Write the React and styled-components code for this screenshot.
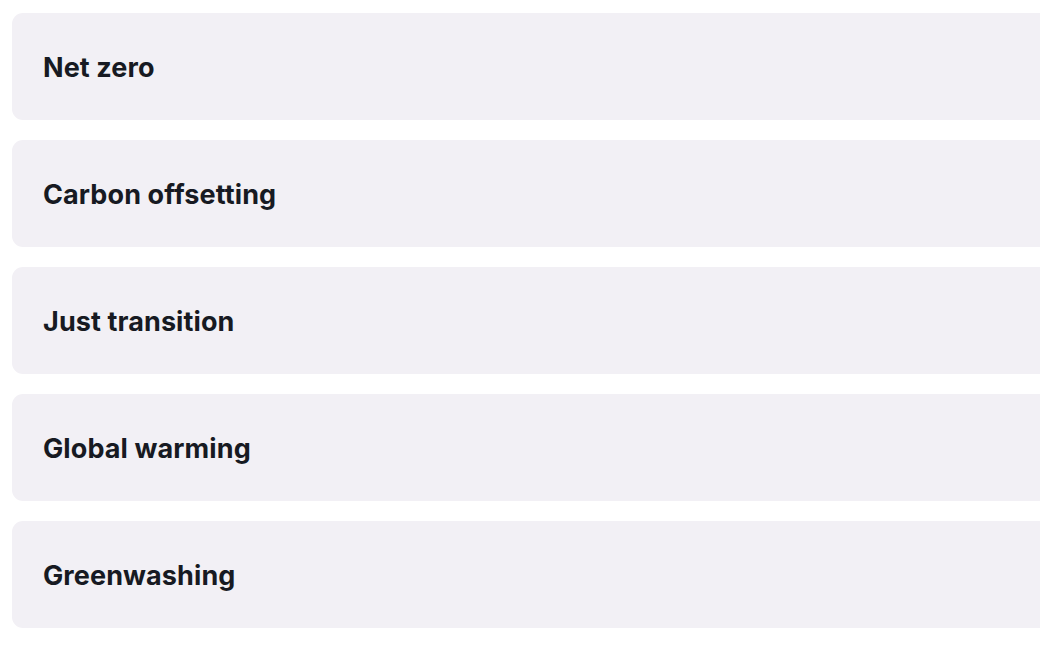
import React from "react";
import styled, { createGlobalStyle } from "styled-components";

const GlobalStyle = createGlobalStyle`
  html, body {
    margin: 0;
    padding: 0;
    background: #ffffff;
  }
`;

const List = styled.div`
  display: flex;
  flex-direction: column;
  gap: 20px;
  padding: 13px 0 0 12px;
`;

// cards run off the right edge in the original, so no right-hand rounding
const Item = styled.div`
  display: flex;
  align-items: center;
  height: 107px;
  padding: 2px 31px 0;
  box-sizing: border-box;
  background-color: #f2f0f5;
  border-radius: 11px 0 0 11px;
`;

const Title = styled.h3`
  margin: 0;
  font-family: Inter, "Liberation Sans", sans-serif;
  font-size: 27px;
  font-weight: 700;
  letter-spacing: 0.1px;
  color: #171a22;
`;

const topics = [
  "Net zero",
  "Carbon offsetting",
  "Just transition",
  "Global warming",
  "Greenwashing",
];

const App = () => (
  <>
    <GlobalStyle />
    <List>
      {topics.map((topic) => (
        <Item key={topic}>
          <Title>{topic}</Title>
        </Item>
      ))}
    </List>
  </>
);

export default App;
